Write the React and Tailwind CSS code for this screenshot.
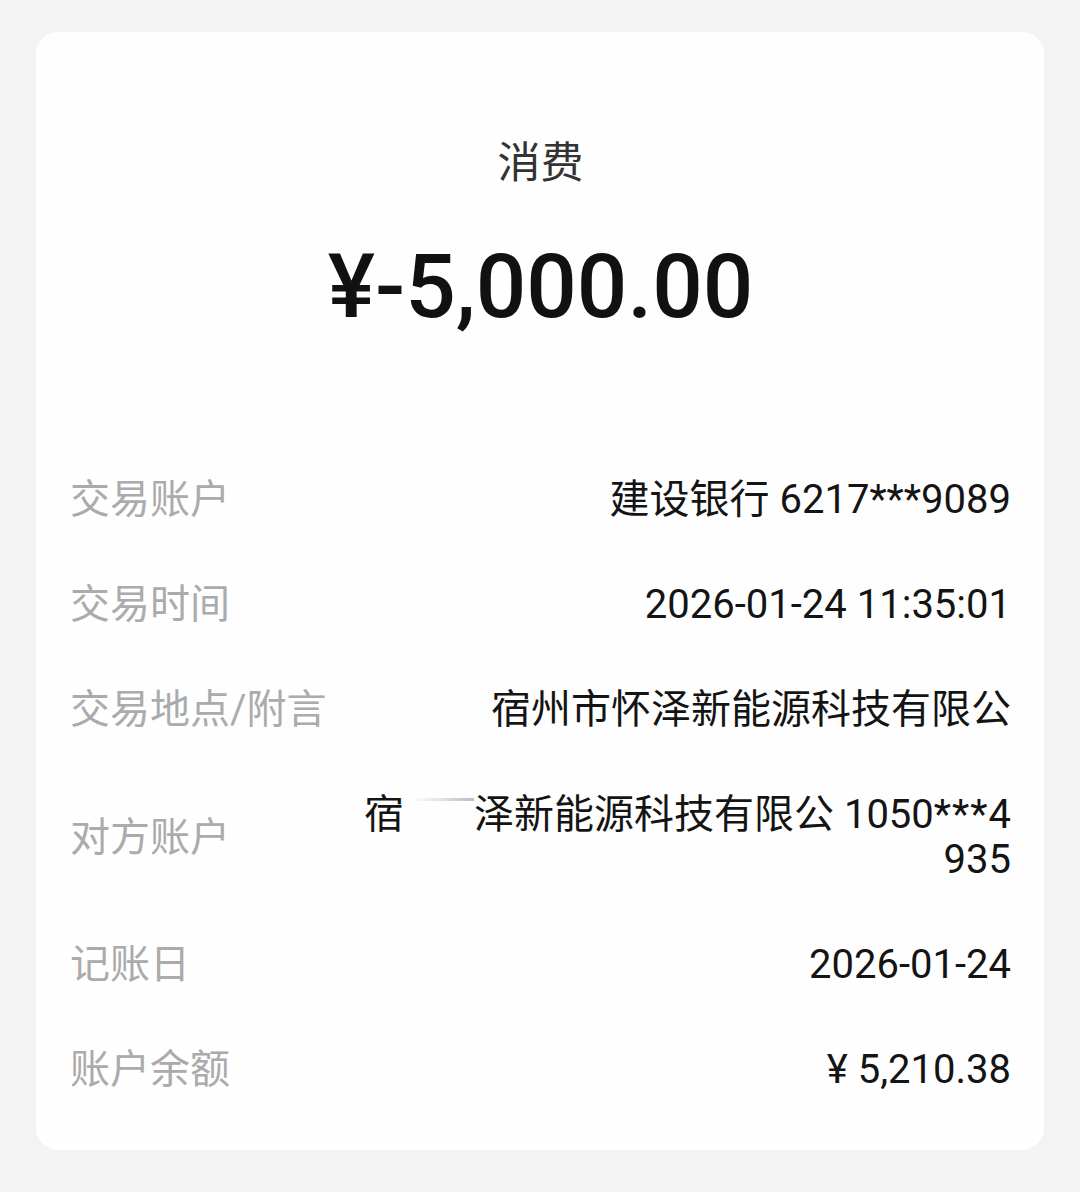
import React from 'react';

const FONT = "font-['Roboto','Noto_Sans_CJK_SC',sans-serif]";

const rows = [
  { label: '交易账户', value: ['建设银行 6217***9089'] },
  { label: '交易时间', value: ['2026-01-24 11:35:01'] },
  { label: '交易地点/附言', value: ['宿州市怀泽新能源科技有限公'] },
  { label: '对方账户', value: null },
  { label: '记账日', value: ['2026-01-24'] },
  { label: '账户余额', value: ['¥ 5,210.38'] },
];

const ErasedCounterparty = () => (
  <div className="flex flex-col items-end">
    <div className="flex items-center h-[45px]">
      <span>宿</span>
      <span className="relative inline-block w-[70px] h-[45px]">
        <span className="absolute left-[6px] right-0 top-[6px] h-[3px] bg-gradient-to-r from-white via-gray-300 to-gray-400 opacity-70"></span>
      </span>
      <span>泽新能源科技有限公 1050<span className="tracking-[1px]">***</span>4</span>
    </div>
    <div className="h-[45px]">935</div>
  </div>
);

const App = () => {
  return (
    <div className={`min-h-[1192px] w-[1080px] bg-[#f3f3f3] pt-[32px] pl-[36px] ${FONT}`}>
      <div className="w-[1008px] h-[1118px] bg-[#fefefe] rounded-[22px] pl-[34px] pr-[33px] pt-[105px]">
        <div className="h-[52px] leading-[52px] text-center text-[43px] text-[#333]">消费</div>
        <div className="mt-[48px] h-[100px] leading-[100px] text-center text-[89px] font-medium text-[#111]">
          ¥-5,000.00
        </div>
        <div className="mt-[110px]">
          {rows.map((row) => (
            <div
              key={row.label}
              className={`flex items-center justify-between ${row.value ? 'h-[105px]' : 'h-[150px]'}`}
            >
              <div className="text-[40px] leading-[45px] text-[#ababab] whitespace-nowrap">{row.label}</div>
              <div className="text-[40px] leading-[45px] text-[#141414] text-right">
                {row.value ? row.value.map((v) => <div key={v}>{v}</div>) : <ErasedCounterparty />}
              </div>
            </div>
          ))}
        </div>
      </div>
    </div>
  );
};

export default App;
